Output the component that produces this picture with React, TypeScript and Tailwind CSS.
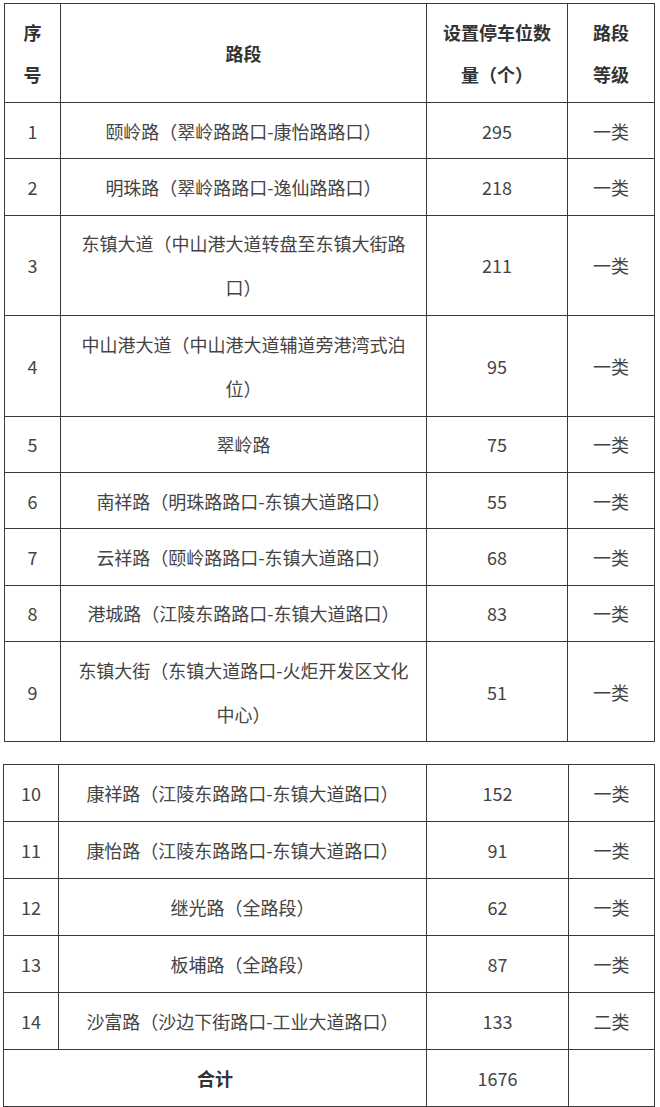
type Row = {
  no: string;
  road: string;
  count: string;
  level: string;
};

const firstRows: Row[] = [
  { no: "1", road: "颐岭路（翠岭路路口-康怡路路口）", count: "295", level: "一类" },
  { no: "2", road: "明珠路（翠岭路路口-逸仙路路口）", count: "218", level: "一类" },
  { no: "3", road: "东镇大道（中山港大道转盘至东镇大街路口）", count: "211", level: "一类" },
  { no: "4", road: "中山港大道（中山港大道辅道旁港湾式泊位）", count: "95", level: "一类" },
  { no: "5", road: "翠岭路", count: "75", level: "一类" },
  { no: "6", road: "南祥路（明珠路路口-东镇大道路口）", count: "55", level: "一类" },
  { no: "7", road: "云祥路（颐岭路路口-东镇大道路口）", count: "68", level: "一类" },
  { no: "8", road: "港城路（江陵东路路口-东镇大道路口）", count: "83", level: "一类" },
  { no: "9", road: "东镇大街（东镇大道路口-火炬开发区文化中心）", count: "51", level: "一类" },
];

const secondRows: Row[] = [
  { no: "10", road: "康祥路（江陵东路路口-东镇大道路口）", count: "152", level: "一类" },
  { no: "11", road: "康怡路（江陵东路路口-东镇大道路口）", count: "91", level: "一类" },
  { no: "12", road: "继光路（全路段）", count: "62", level: "一类" },
  { no: "13", road: "板埔路（全路段）", count: "87", level: "一类" },
  { no: "14", road: "沙富路（沙边下街路口-工业大道路口）", count: "133", level: "二类" },
];

const base =
  "border border-[#3a3a3a] px-[12px] text-center align-middle leading-[44px]";
const cellTop = `${base} py-[5.7px]`;
const cellBottom = `${base} py-[6px]`;
const head =
  "border border-[#3a3a3a] py-[7px] text-center align-middle font-bold leading-[42px] text-[#333]";

function BodyRows({ rows, cell }: { rows: Row[]; cell: string }) {
  return (
    <>
      {rows.map((row) => (
        <tr key={row.no}>
          <td className={cell}>{row.no}</td>
          <td className={cell}>{row.road}</td>
          <td className={cell}>{row.count}</td>
          <td className={cell}>{row.level}</td>
        </tr>
      ))}
    </>
  );
}

export default function App() {
  return (
    <div
      className="min-h-[1107px] bg-white pt-[3px] text-[18px] text-[#444]"
      style={{ fontFamily: '"Noto Sans CJK SC", "Noto Sans", sans-serif' }}
    >
      <table className="ml-[4px] w-[650px] table-fixed border-collapse">
        <colgroup>
          <col className="w-[56px]" />
          <col className="w-[366px]" />
          <col className="w-[141px]" />
          <col className="w-[87px]" />
        </colgroup>
        <thead>
          <tr>
            <th className={`${head} px-[12px]`}>序号</th>
            <th className={`${head} px-[12px]`}>路段</th>
            <th className={`${head} px-[12px]`}>设置停车位数量（个）</th>
            <th className={`${head} px-[18px]`}>路段等级</th>
          </tr>
        </thead>
        <tbody>
          <BodyRows rows={firstRows} cell={cellTop} />
        </tbody>
      </table>

      <table className="mt-[22px] ml-[3px] w-[651px] table-fixed border-collapse">
        <colgroup>
          <col className="w-[55px]" />
          <col className="w-[368px]" />
          <col className="w-[142px]" />
          <col className="w-[86px]" />
        </colgroup>
        <tbody>
          <BodyRows rows={secondRows} cell={cellBottom} />
          <tr>
            <td colSpan={2} className={`${cellBottom} font-bold text-[#333]`}>
              合计
            </td>
            <td className={cellBottom}>1676</td>
            <td className={cellBottom}></td>
          </tr>
        </tbody>
      </table>
    </div>
  );
}
